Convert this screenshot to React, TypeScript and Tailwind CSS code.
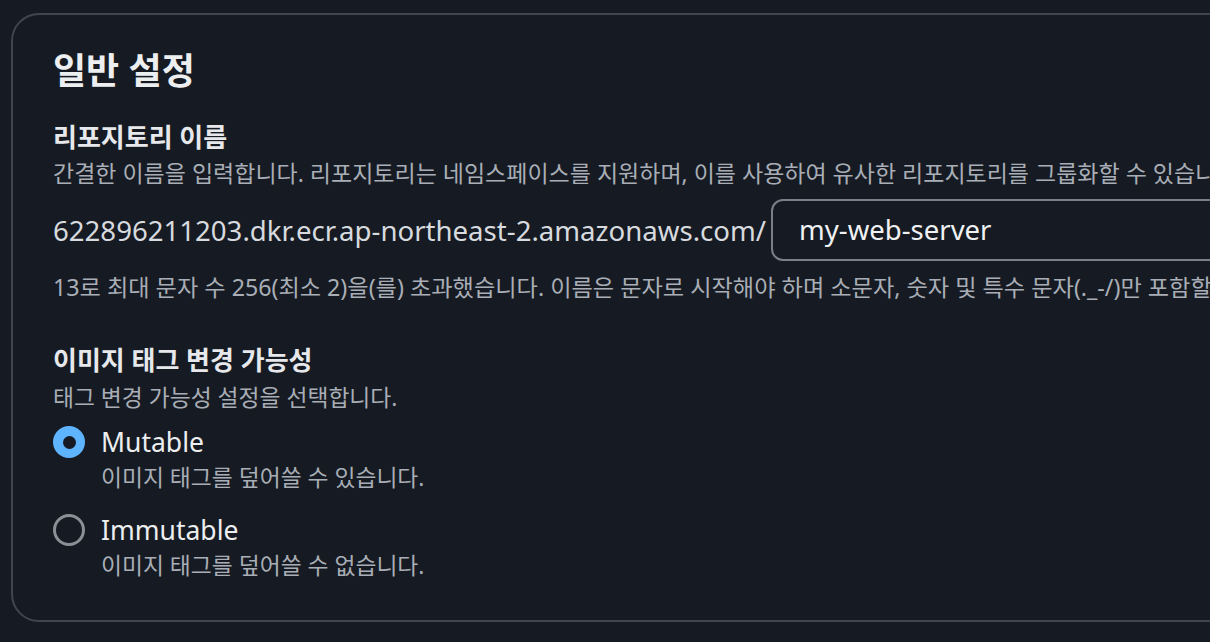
export default function App() {
  return (
    <div
      className="w-[1210px] h-[642px] overflow-hidden bg-[#161b23] pt-[13px] pl-[11px]"
      style={{ fontFamily: '"Noto Sans", "Noto Sans CJK KR", sans-serif' }}
    >
      <section className="w-[1300px] h-[609px] rounded-[28px] border-2 border-[#40454e] pl-[40px] pt-[35px] text-[#eceef0]">
        <h2 className="text-[36px] leading-[42px] font-bold whitespace-nowrap">일반 설정</h2>

        <div className="mt-[29px] text-[26px] leading-[32px] font-bold text-[#e6e8eb]">리포지토리 이름</div>
        <p className="mt-[6px] text-[23px] leading-[28px] text-[#a9aeb6] whitespace-nowrap">
          간결한 이름을 입력합니다. 리포지토리는 네임스페이스를 지원하며, 이를 사용하여 유사한 리포지토리를 그룹화할 수 있습니다.
        </p>

        <div className="mt-[12px] flex items-center">
          <span className="text-[27.6px] leading-[32px] text-[#d7dade] whitespace-nowrap">
            622896211203.dkr.ecr.ap-northeast-2.amazonaws.com/
          </span>
          <div className="ml-[5px] h-[62px] w-[600px] flex items-center rounded-[12px] border-2 border-[#7b7f87] pl-[26px]">
            <span className="text-[27.5px] leading-[32px] text-[#f0f1f3]">my-web-server</span>
          </div>
        </div>

        <p className="mt-[12px] text-[23.2px] leading-[28px] text-[#a9aeb6] whitespace-nowrap">
          13로 최대 문자 수 256(최소 2)을(를) 초과했습니다. 이름은 문자로 시작해야 하며 소문자, 숫자 및 특수 문자(._-/)만 포함할 수 있습니다.
        </p>

        <div className="mt-[43px] text-[26px] leading-[32px] font-bold text-[#e6e8eb]">이미지 태그 변경 가능성</div>
        <p className="mt-[8px] text-[22.8px] leading-[28px] text-[#a9aeb6]">태그 변경 가능성 설정을 선택합니다.</p>

        <div className="mt-[14px]">
          <div className="flex items-center h-[32px]">
            <span className="w-[32px] h-[32px] rounded-full bg-[#5fb4ff] flex items-center justify-center">
              <span className="w-[13px] h-[13px] rounded-full bg-[#161b23]" />
            </span>
            <span className="ml-[16px] text-[26.5px] leading-[32px] text-[#eceef0]">Mutable</span>
          </div>
          <p className="mt-[6px] ml-[48px] text-[22.8px] leading-[28px] text-[#a9aeb6]">이미지 태그를 덮어쓸 수 있습니다.</p>
        </div>

        <div className="mt-[22px]">
          <div className="flex items-center h-[32px]">
            <span className="w-[32px] h-[32px] rounded-full border-[3px] border-[#8c8f95]" />
            <span className="ml-[16px] text-[26.5px] leading-[32px] text-[#eceef0]">Immutable</span>
          </div>
          <p className="mt-[6px] ml-[48px] text-[22.8px] leading-[28px] text-[#a9aeb6]">이미지 태그를 덮어쓸 수 없습니다.</p>
        </div>
      </section>
    </div>
  );
}
